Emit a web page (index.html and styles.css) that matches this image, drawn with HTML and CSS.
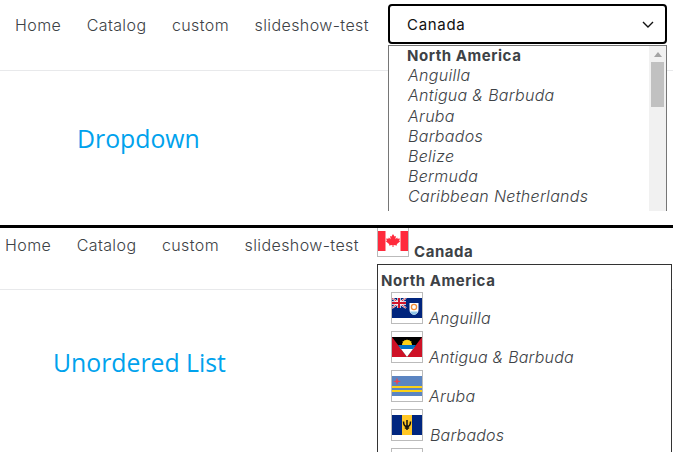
FILE: index.html
```html
<!DOCTYPE html>
<html lang="en">
<head>
    <meta charset="UTF-8">
    <title>Country selector</title>
    <link rel="stylesheet" href="styles.css">
</head>
<body>
    <section class="panel panel-dropdown">
        <header class="site-header">
            <nav class="site-nav">
                <a href="#">Home</a>
                <a href="#">Catalog</a>
                <a href="#">custom</a>
                <a href="#">slideshow-test</a>
            </nav>
            <div class="picker">
                <div class="picker-value">
                    <span>Canada</span>
                    <svg class="chevron" width="12" height="7" viewBox="0 0 12 7"><path d="M1 1l5 5 5-5" fill="none" stroke="#111" stroke-width="1.4"/></svg>
                </div>
                <div class="picker-list">
                    <div class="picker-options">
                        <div class="option-group">North America</div>
                        <div class="option">Anguilla</div>
                        <div class="option">Antigua &amp; Barbuda</div>
                        <div class="option">Aruba</div>
                        <div class="option">Barbados</div>
                        <div class="option">Belize</div>
                        <div class="option">Bermuda</div>
                        <div class="option">Caribbean Netherlands</div>
                    </div>
                    <div class="scrollbar">
                        <div class="scroll-arrow"></div>
                        <div class="scroll-thumb"></div>
                    </div>
                </div>
            </div>
        </header>
        <h1 class="demo-title">Dropdown</h1>
    </section>

    <section class="panel panel-list">
        <header class="site-header">
            <nav class="site-nav">
                <a href="#">Home</a>
                <a href="#">Catalog</a>
                <a href="#">custom</a>
                <a href="#">slideshow-test</a>
            </nav>
            <div class="flag-picker">
                <div class="flag-current">
                    <span class="flag">
                        <svg width="30" height="20" viewBox="0 0 30 20">
                            <rect width="30" height="20" fill="#fff"/>
                            <rect width="7.5" height="20" fill="#ff2a3c"/>
                            <rect x="22.5" width="7.5" height="20" fill="#ff2a3c"/>
                            <path d="M15 3l1.5 2.6 1.4-.7-.5 3.4 1.8-1.8.4 1.3 2.3-.4-.7 2.3 1 .6-3.5 2.9.4 1.2-3.6-.5V16h-1v-2.1l-3.6.5.4-1.2-3.5-2.9 1-.6-.7-2.3 2.3.4.4-1.3 1.8 1.8-.5-3.4 1.4.7z" fill="#ff2a3c"/>
                        </svg>
                    </span>
                    <span class="flag-current-name">Canada</span>
                </div>
                <ul class="flag-list">
                    <li class="flag-group">North America</li>
                    <li class="flag-item">
                        <span class="flag">
                            <svg width="30" height="20" viewBox="0 0 30 20">
                                <rect width="30" height="20" fill="#00247d"/>
                                <path d="M0 0l14 10M14 0L0 10" stroke="#fff" stroke-width="2"/>
                                <path d="M0 0l14 10M14 0L0 10" stroke="#cf142b" stroke-width=".8"/>
                                <path d="M7 0v10M0 5h14" stroke="#fff" stroke-width="3.4"/>
                                <path d="M7 0v10M0 5h14" stroke="#cf142b" stroke-width="2"/>
                                <path d="M17.500 5h9v7q0 3.500-4.500 5q-4.500-1.500-4.500-5z" fill="#fff"/>
                                <circle cx="22" cy="9" r="2.600" fill="none" stroke="#f28c38" stroke-width="1.300"/>
                                <path d="M18 13.500h8q-1 2.500-4 3.400q-3-.9-4-3.400z" fill="#8fc5e8"/>
                            </svg>
                        </span>
                        <span class="flag-name">Anguilla</span>
                    </li>
                    <li class="flag-item">
                        <span class="flag">
                            <svg width="30" height="20" viewBox="0 0 30 20">
                                <rect width="30" height="20" fill="#ce1126"/>
                                <path d="M0 0h30L15 20z" fill="#000"/>
                                <path d="M7.500 10h15l-7.500 10z" fill="#fff"/>
                                <path d="M6 8h18L21 12H9z" fill="#0072c6"/>
                                <path d="M10 8a5 5 0 0 1 10 0z" fill="#fcd116"/>
                                <path d="M15 2l.8 2 1.800-1.200-.3 2 2.300-.8-1 2-7.200 0-1-2 2.300.8-.3-2 1.800 1.200z" fill="#fcd116"/>
                            </svg>
                        </span>
                        <span class="flag-name">Antigua &amp; Barbuda</span>
                    </li>
                    <li class="flag-item">
                        <span class="flag">
                            <svg width="30" height="20" viewBox="0 0 30 20">
                                <rect width="30" height="20" fill="#5b85c2"/>
                                <rect y="10" width="30" height="2" fill="#fcd116"/>
                                <rect y="14" width="30" height="2" fill="#fcd116"/>
                                <path d="M5 1.500l.9 3 3 .9-3 .9-.9 3-.9-3-3-.9 3-.9z" fill="#ef4350"/>
                            </svg>
                        </span>
                        <span class="flag-name">Aruba</span>
                    </li>
                    <li class="flag-item">
                        <span class="flag">
                            <svg width="30" height="20" viewBox="0 0 30 20">
                                <rect width="30" height="20" fill="#00267f"/>
                                <rect x="10" width="10" height="20" fill="#ffc726"/>
                                <path d="M15 5v10M11.500 6.500q0 5 3.500 5q3.500 0 3.500-5M12.800 13h4.400" fill="none" stroke="#111" stroke-width="1.500"/>
                            </svg>
                        </span>
                        <span class="flag-name flag-name-nudge">Barbados</span>
                    </li>
                    <li class="flag-item">
                        <span class="flag"></span>
                    </li>
                </ul>
            </div>
        </header>
        <h1 class="demo-title">Unordered List</h1>
    </section>
</body>
</html>
```
FILE: styles.css
```css
body {
    margin: 0;
    background: #fff;
    color: #3d4246;
    font-family: Inter, "Noto Sans", sans-serif;
    font-size: 16px;
}
.panel {
    position: relative;
    overflow: hidden;
    width: 673px;
}
.panel-dropdown {
    height: 225px;
    border-bottom: 3px solid #000;
}
.panel-list {
    height: 224px;
}
.site-header {
    display: flex;
    align-items: flex-start;
    border-bottom: 1px solid #e8e9eb;
}
.panel-dropdown .site-header {
    height: 70px;
    padding-left: 15px;
}
.panel-list .site-header {
    height: 61px;
    padding-left: 5px;
}
.site-nav {
    display: flex;
    gap: 25.5px;
    width: 373px;
    font-weight: 300;
    letter-spacing: 0.4px;
}
.panel-list .site-nav {
    width: 372px;
}
.panel-dropdown .site-nav {
    padding-top: 16px;
}
.panel-list .site-nav {
    padding-top: 8px;
}
.site-nav a {
    color: #3d4246;
    text-decoration: none;
    line-height: 19px;
}

/* dropdown version */
.picker {
    position: relative;
    width: 279px;
    margin-top: 4px;
}
.picker-value {
    display: flex;
    justify-content: space-between;
    align-items: center;
    box-sizing: border-box;
    height: 40px;
    padding: 0 11px 0 17px;
    border: 2px solid #000;
    border-radius: 4px;
    color: #111;
    font-size: 15px;
    letter-spacing: 0.7px;
}
.picker-list {
    position: absolute;
    top: 41px;
    left: 0;
    display: flex;
    box-sizing: border-box;
    width: 279px;
    height: 166px;
    overflow: hidden;
    background: #fff;
    border: 1px solid #767676;
    border-bottom: none;
}
.picker-options {
    flex: 1;
    padding-left: 18px;
}
.option-group {
    font-weight: 700;
    line-height: 19.2px;
    font-size: 15px;
    letter-spacing: 0.55px;
}
.option {
    font-style: italic;
    font-weight: 300;
    line-height: 20.2px;
    padding-left: 1px;
    letter-spacing: 0.3px;
}
.scrollbar {
    width: 17px;
    background: #f1f1f1;
}
.scroll-arrow {
    width: 0;
    margin: 6px auto 5px;
    border: 4px solid transparent;
    border-top: none;
    border-bottom: 5px solid #a3a3a3;
}
.scroll-thumb {
    width: 13px;
    height: 45px;
    margin: 0 auto;
    background: #c1c1c1;
}

/* list version */
.flag-picker {
    position: relative;
    width: 295px;
}
.flag-current {
    display: flex;
    align-items: flex-end;
    gap: 5px;
    margin-top: -3px;
}
.flag-current-name {
    font-weight: 700;
    font-size: 15px;
    letter-spacing: 0.55px;
    line-height: 11px;
}
.flag {
    display: block;
    flex: none;
    box-sizing: border-box;
    width: 32px;
    height: 32px;
    padding-top: 5px;
    border: 1px solid #bbb;
}
.flag svg {
    display: block;
}
.flag-list {
    position: absolute;
    top: 36px;
    left: 0;
    width: 295px;
    box-sizing: border-box;
    margin: 0;
    padding: 4px 0 0 3px;
    list-style: none;
    background: #fff;
    border: 1px solid #333;
}
.flag-group {
    font-weight: 700;
    font-size: 15px;
    letter-spacing: 0.55px;
    line-height: 23px;
}
.flag-item {
    display: flex;
    align-items: flex-end;
    gap: 6px;
    height: 32px;
    margin-bottom: 7px;
    padding-left: 10px;
    font-style: italic;
    font-weight: 300;
    letter-spacing: 0.2px;
}
.flag-name {
    line-height: 12px;
}
.flag-name-nudge {
    margin-left: 1px;
}

.demo-title {
    margin: 0;
    color: #00a2ed;
    font-family: "Open Sans", sans-serif;
    font-size: 24.8px;
    font-weight: 400;
    line-height: 32px;
}
.panel-dropdown .demo-title {
    padding: 51px 0 0 77px;
}
.panel-list .demo-title {
    padding: 56px 0 0 53px;
}
```
